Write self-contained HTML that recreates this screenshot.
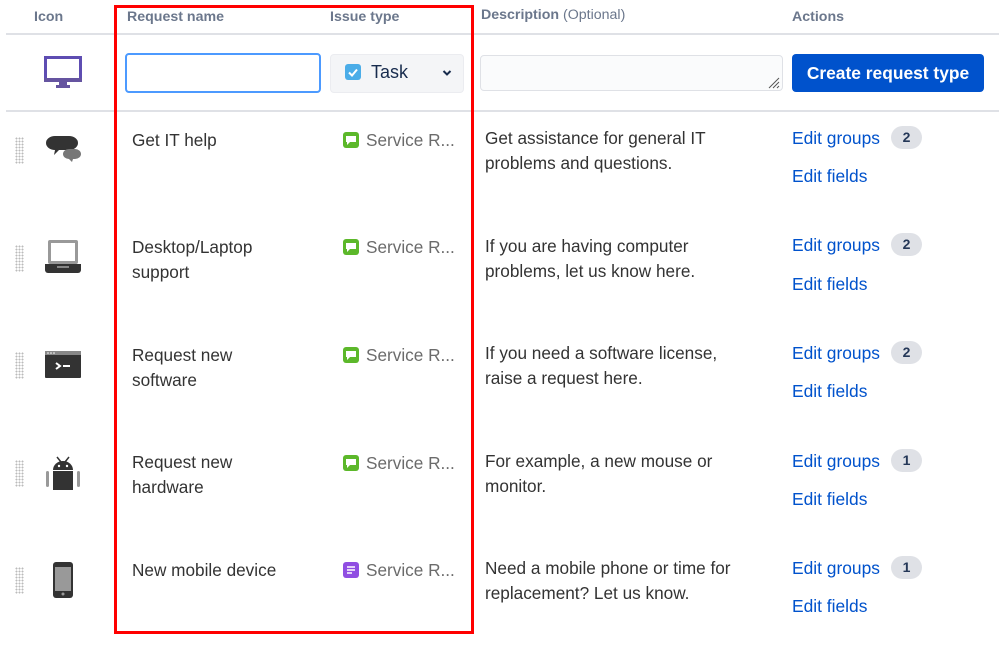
<!DOCTYPE html>
<html><head><meta charset="utf-8"><style>
*{margin:0;padding:0;box-sizing:border-box}
body{width:999px;height:645px;background:#fff;font-family:"Liberation Sans",sans-serif;position:relative;overflow:hidden;color:#333}
.a{position:absolute;white-space:nowrap}
.h{font-size:14.2px;font-weight:bold;color:#6b778c;top:9px}
.t{font-size:17.2px;color:#333;line-height:25px}
.lnk{font-size:17.4px;color:#0052cc}
.badge{position:absolute;width:31px;height:23px;border-radius:12px;background:#dfe1e6;color:#253858;font-size:14px;font-weight:bold;text-align:center;line-height:23px}
.svc{font-size:17.2px;color:#6b6b6b}
.sq{position:absolute;width:16px;height:16px;border-radius:3px}
.drag{position:absolute;width:9px;height:27px;background-image:radial-gradient(#bbb 0.9px,transparent 1.1px);background-size:3px 3px}
</style></head><body>
<div class="a h" style="left:34px">Icon</div>
<div class="a h" style="left:127px">Request name</div>
<div class="a h" style="left:330px">Issue type</div>
<div class="a h" style="left:481px;top:7px">Description <span style="font-weight:normal">(Optional)</span></div>
<div class="a h" style="left:792px">Actions</div>
<div class="a" style="left:6px;top:33px;width:993px;height:2px;background:#dfe1e6"></div>
<div class="a" style="left:6px;top:110px;width:993px;height:2px;background:#dfe1e6"></div>

<svg class="a" style="left:44px;top:56px" width="38" height="34" viewBox="0 0 38 34"><rect x="1.5" y="1.5" width="35" height="23" fill="#fff" stroke="#5e4db2" stroke-width="3"/><rect x="0" y="22" width="38" height="4" fill="#6554a0"/><rect x="15" y="26" width="8" height="4" fill="#6554a0"/><rect x="12" y="29" width="14" height="3" fill="#6554a0"/></svg>
<div class="a" style="left:125px;top:53px;width:196px;height:40px;border:2px solid #4c9aff;border-radius:4px"></div>
<div class="a" style="left:330px;top:54px;width:134px;height:39px;background:#f4f5f7;border:1px solid #ebecf0;border-radius:4px"></div>
<div class="sq" style="left:345px;top:64px;background:#4bade8"><svg width="16" height="16"><path d="M4 8.5l3 3 5-6" stroke="#fff" stroke-width="2" fill="none"/></svg></div>
<div class="a" style="left:371px;top:62px;font-size:18px;color:#172b4d">Task</div>
<svg class="a" style="left:442px;top:69px" width="10" height="8"><path d="M1.5 2l3.5 3.5L8.5 2" stroke="#172b4d" stroke-width="2" fill="none"/></svg>
<div class="a" style="left:480px;top:55px;width:303px;height:36px;border:1px solid #dfe1e6;border-radius:4px;background:#fafbfc"></div>
<svg class="a" style="left:766px;top:75px" width="14" height="14"><path d="M3 13L13 3M7 13L13 7M11 13L13 11" stroke="#555" stroke-width="1"/></svg>
<div class="a" style="left:792px;top:54px;width:192px;height:38px;background:#0052cc;border-radius:4px;color:#fff;font-weight:bold;font-size:17.4px;text-align:center;line-height:38px">Create request type</div>

<div class="drag" style="left:15px;top:137px"></div>
<svg class="a" style="left:45px;top:135px" width="38" height="28"><path d="M10 1h14a9 7 0 0 1 0 14H14l-5 5 1-5A9 7 0 0 1 10 1z" fill="#333"/><path d="M24 14h6a6 5 0 0 1 0 10h-2l-1 3-3-3a6 5 0 0 1 0-10z" fill="#777"/></svg>
<div class="a t" style="left:132px;top:128px">Get IT help</div>
<div class="sq" style="left:343px;top:132px;background:#5cb82a"><svg width="16" height="16"><path d="M3 4h10v6H7l-3 3v-3H3z" fill="#fff"/></svg></div>
<div class="a svc" style="left:366px;top:130px">Service R...</div>
<div class="a t" style="left:485px;top:126px">Get assistance for general IT<br>problems and questions.</div>
<div class="a lnk" style="left:792px;top:128px">Edit groups</div><div class="badge" style="left:891px;top:126px">2</div>
<div class="a lnk" style="left:792px;top:166px">Edit fields</div>

<div class="drag" style="left:15px;top:245px"></div>
<svg class="a" style="left:44px;top:239px" width="38" height="35"><rect x="4" y="1" width="30" height="24" rx="2" fill="#999"/><rect x="7" y="4" width="24" height="18" fill="#fff"/><path d="M1 25h36v6a3 3 0 0 1-3 3H4a3 3 0 0 1-3-3z" fill="#333"/><rect x="13" y="27" width="12" height="2" fill="#888"/></svg>
<div class="a t" style="left:132px;top:235px">Desktop/Laptop<br>support</div>
<div class="sq" style="left:343px;top:239px;background:#5cb82a"><svg width="16" height="16"><path d="M3 4h10v6H7l-3 3v-3H3z" fill="#fff"/></svg></div>
<div class="a svc" style="left:366px;top:237px">Service R...</div>
<div class="a t" style="left:485px;top:234px">If you are having computer<br>problems, let us know here.</div>
<div class="a lnk" style="left:792px;top:235px">Edit groups</div><div class="badge" style="left:891px;top:233px">2</div>
<div class="a lnk" style="left:792px;top:274px">Edit fields</div>

<div class="drag" style="left:15px;top:352px"></div>
<svg class="a" style="left:44px;top:350px" width="38" height="28"><rect x="1" y="1" width="36" height="27" rx="1" fill="#333"/><rect x="1" y="1" width="36" height="4" fill="#888"/><circle cx="4" cy="3" r="0.8" fill="#fff"/><circle cx="7" cy="3" r="0.8" fill="#fff"/><circle cx="10" cy="3" r="0.8" fill="#fff"/><path d="M12 13l4 3-4 3" stroke="#fff" stroke-width="2" fill="none"/><rect x="19" y="15" width="7" height="2" fill="#fff"/></svg>
<div class="a t" style="left:132px;top:343px">Request new<br>software</div>
<div class="sq" style="left:343px;top:347px;background:#5cb82a"><svg width="16" height="16"><path d="M3 4h10v6H7l-3 3v-3H3z" fill="#fff"/></svg></div>
<div class="a svc" style="left:366px;top:345px">Service R...</div>
<div class="a t" style="left:485px;top:341px">If you need a software license,<br>raise a request here.</div>
<div class="a lnk" style="left:792px;top:343px">Edit groups</div><div class="badge" style="left:891px;top:341px">2</div>
<div class="a lnk" style="left:792px;top:381px">Edit fields</div>

<div class="drag" style="left:15px;top:460px"></div>
<svg class="a" style="left:44px;top:455px" width="38" height="36"><path d="M13 2l4 5M25 2l-4 5" stroke="#333" stroke-width="1.5"/><path d="M9 15a10 9 0 0 1 20 0z" fill="#333"/><circle cx="15" cy="11" r="1.2" fill="#fff"/><circle cx="23" cy="11" r="1.2" fill="#fff"/><rect x="9" y="16" width="20" height="19" fill="#333"/><rect x="2" y="16" width="3" height="16" rx="1.5" fill="#999"/><rect x="33" y="16" width="3" height="16" rx="1.5" fill="#999"/></svg>
<div class="a t" style="left:132px;top:450px">Request new<br>hardware</div>
<div class="sq" style="left:343px;top:455px;background:#5cb82a"><svg width="16" height="16"><path d="M3 4h10v6H7l-3 3v-3H3z" fill="#fff"/></svg></div>
<div class="a svc" style="left:366px;top:453px">Service R...</div>
<div class="a t" style="left:485px;top:449px">For example, a new mouse or<br>monitor.</div>
<div class="a lnk" style="left:792px;top:451px">Edit groups</div><div class="badge" style="left:891px;top:449px">1</div>
<div class="a lnk" style="left:792px;top:489px">Edit fields</div>

<div class="drag" style="left:15px;top:567px"></div>
<svg class="a" style="left:52px;top:561px" width="22" height="38"><rect x="1" y="1" width="20" height="36" rx="3" fill="#333"/><rect x="3" y="6" width="16" height="24" fill="#999"/><circle cx="11" cy="33" r="1.5" fill="#999"/></svg>
<div class="a t" style="left:132px;top:558px">New mobile device</div>
<div class="sq" style="left:343px;top:562px;background:#904ee2"><svg width="16" height="16"><path d="M4 5h8M4 8h8M4 11h5" stroke="#fff" stroke-width="1.5"/></svg></div>
<div class="a svc" style="left:366px;top:560px">Service R...</div>
<div class="a t" style="left:485px;top:556px">Need a mobile phone or time for<br>replacement? Let us know.</div>
<div class="a lnk" style="left:792px;top:558px">Edit groups</div><div class="badge" style="left:891px;top:556px">1</div>
<div class="a lnk" style="left:792px;top:596px">Edit fields</div>

<div class="a" style="left:114px;top:5px;width:360px;height:629px;border:3px solid #f00"></div>
</body></html>
